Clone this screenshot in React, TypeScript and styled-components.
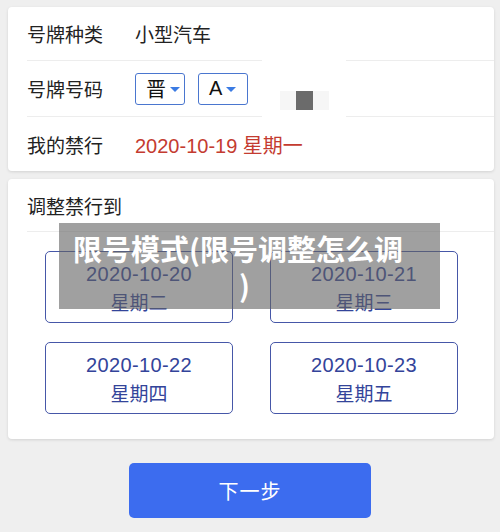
import React from "react";
import styled, { createGlobalStyle } from "styled-components";

const Global = createGlobalStyle`
  html, body { margin: 0; padding: 0; background: #efefef; }
  body { font-family: "Liberation Sans", "Noto Sans CJK SC", sans-serif; color: #222; }
  * { box-sizing: border-box; }
`;

const Page = styled.div`
  position: relative;
  width: 500px;
  height: 532px;
  padding: 7px 6px 0 8px;
  display: flex;
  flex-direction: column;
  overflow: hidden;
`;

const Card = styled.div<{ $mt?: number }>`
  background: #fff;
  border-radius: 4px;
  box-shadow: 0 1px 3px rgba(0, 0, 0, 0.12);
  margin-top: ${(p) => p.$mt ?? 0}px;
  display: flex;
  flex-direction: column;
`;

const Row = styled.div<{ $h: number; $last?: boolean }>`
  height: ${(p) => p.$h}px;
  margin-left: 19px;
  display: flex;
  align-items: center;
  border-bottom: ${(p) => (p.$last ? "none" : "1px solid #ededed")};
  font-size: 19px;
`;

const Label = styled.div`
  width: 108px;
  color: #222;
`;

const Value = styled.div<{ $red?: boolean }>`
  color: ${(p) => (p.$red ? "#c43b30" : "#222")};
  font-size: ${(p) => (p.$red ? 20 : 19)}px;
`;

const Selects = styled.div`
  display: flex;
  gap: 13px;
`;

const Select = styled.div`
  width: 50px;
  height: 32px;
  border: 1.5px solid #4a76cf;
  border-radius: 3px;
  display: flex;
  align-items: center;
  padding-left: 10px;
  gap: 4px;
  font-size: 20px;
  color: #111;
`;

const Caret = styled.span`
  width: 0;
  height: 0;
  border-left: 5px solid transparent;
  border-right: 5px solid transparent;
  border-top: 5px solid #3b7be3;
  margin-top: 1px;
`;

const Grid = styled.div`
  display: grid;
  grid-template-columns: 188px 188px;
  column-gap: 37px;
  row-gap: 19px;
  padding: 19px 36px 25px 37px;
`;

const DayBtn = styled.div`
  height: 72px;
  padding-top: 3px;
  border: 1.5px solid #4657a8;
  border-radius: 5px;
  display: flex;
  flex-direction: column;
  align-items: center;
  justify-content: center;
  color: #33449a;
  font-size: 19px;
  line-height: 30px;
`;

const DateText = styled.span`
  font-size: 20px;
  letter-spacing: 0.35px;
`;

const NextBtn = styled.div`
  align-self: center;
  margin: 24px 0 0 -2px;
  width: 242px;
  height: 55px;
  border-radius: 5px;
  background: #3c6cef;
  color: #fff;
  font-size: 20px;
  display: flex;
  align-items: center;
  justify-content: center;
  letter-spacing: 1px;
`;

const Mask = styled.div`
  position: absolute;
  left: 262px;
  top: 56px;
  width: 84px;
  height: 64px;
  background: #fff;
  display: flex;
  align-items: flex-start;
  justify-content: center;
  padding-top: 35px;
`;

const MaskInner = styled.div`
  width: 49px;
  height: 19px;
  background: #f6f6f6;
  display: flex;
  justify-content: center;
`;

const Square = styled.div`
  width: 17px;
  height: 19px;
  background: #6b6b6b;
`;

const Watermark = styled.div`
  position: absolute;
  left: 59px;
  top: 223px;
  width: 381px;
  height: 86px;
  background: rgba(96, 96, 96, 0.6);
  color: #fff;
  font-family: "Noto Sans CJK SC", sans-serif;
  font-weight: 700;
  font-size: 29px;
  line-height: 36px;
  padding: 7px 38px 7px 14px;
  text-align: center;
  white-space: nowrap;
`;

const Close = styled.span`
  margin-left: 14px;
`;

const days = [
  ["2020-10-20", "星期二"],
  ["2020-10-21", "星期三"],
  ["2020-10-22", "星期四"],
  ["2020-10-23", "星期五"],
];

export default function App() {
  return (
    <>
      <Global />
      <Page>
        <Card>
          <Row $h={54}>
            <Label>号牌种类</Label>
            <Value>小型汽车</Value>
          </Row>
          <Row $h={56}>
            <Label>号牌号码</Label>
            <Selects>
              <Select>
                晋<Caret />
              </Select>
              <Select>
                A<Caret />
              </Select>
            </Selects>
          </Row>
          <Row $h={54} $last>
            <Label>我的禁行</Label>
            <Value $red>2020-10-19 星期一</Value>
          </Row>
        </Card>
        <Card $mt={8}>
          <Row $h={53}>
            <Label>调整禁行到</Label>
          </Row>
          <Grid>
            {days.map(([d, w]) => (
              <DayBtn key={d}>
                <DateText>{d}</DateText>
                <span>{w}</span>
              </DayBtn>
            ))}
          </Grid>
        </Card>
        <NextBtn>下一步</NextBtn>
        <Mask>
          <MaskInner>
            <Square />
          </MaskInner>
        </Mask>
        <Watermark>
          限号模式(限号调整怎么调
          <br />
          <Close>)</Close>
        </Watermark>
      </Page>
    </>
  );
}
